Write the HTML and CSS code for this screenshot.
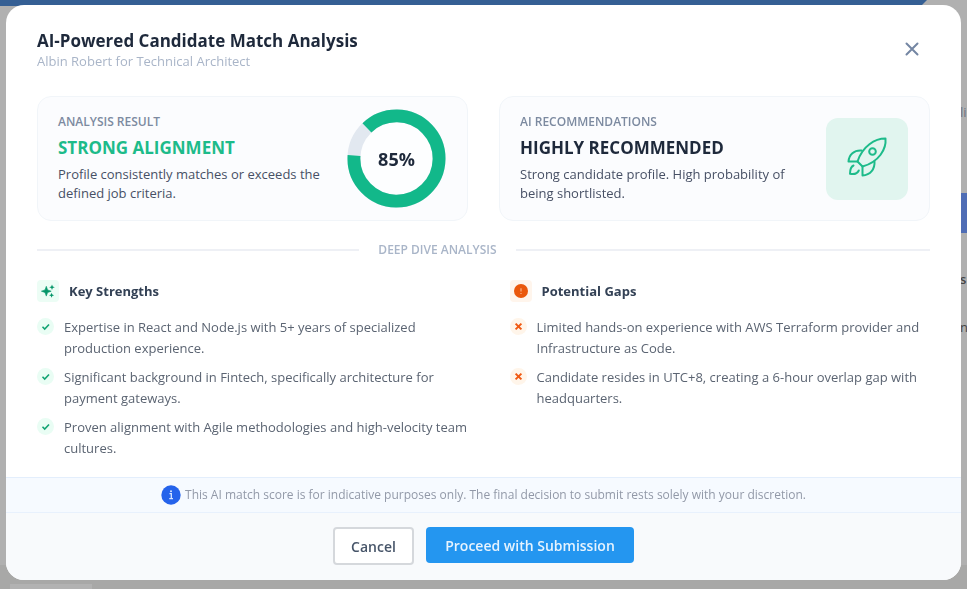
FILE: index.html
```html
<!DOCTYPE html>
<html lang="en">
<head>
    <meta charset="UTF-8">
    <meta name="viewport" content="width=device-width, initial-scale=1.0">
    <title>AI-Powered Candidate Match Analysis</title>
    <link rel="stylesheet" href="styles.css">
</head>
<body>
    <!-- Dimmed page behind the dialog -->
    <div class="page" aria-hidden="true">
        <div class="page-banner"></div>
        <div class="page-side">
            <span class="side-label">li</span>
            <span class="side-button"></span>
            <span class="side-head">s</span>
            <span class="side-cell">n</span>
        </div>
        <div class="page-tab"></div>
    </div>

    <div class="modal" role="dialog" aria-labelledby="modalTitle">
        <header class="modal-header">
            <div>
                <h1 id="modalTitle">AI-Powered Candidate Match Analysis</h1>
                <p class="subtitle">Albin Robert for Technical Architect</p>
            </div>
            <button class="close" aria-label="Close">
                <svg width="14" height="14" viewBox="0 0 14 14"><path d="M1.5 1.5l11 11M12.5 1.5l-11 11" fill="none" stroke="#7486a3" stroke-width="2" stroke-linecap="round"/></svg>
            </button>
        </header>

        <main class="modal-body">
            <div class="cards">
                <section class="card">
                    <div class="card-text">
                        <h2>ANALYSIS RESULT</h2>
                        <p class="result green">STRONG ALIGNMENT</p>
                        <p class="description">Profile consistently matches or exceeds the defined job criteria.</p>
                    </div>
                    <div class="score">
                        <svg viewBox="0 0 100 100">
                            <circle cx="50" cy="50" r="43" fill="#fdfeff" stroke="#e2e8f0" stroke-width="13"/>
                            <circle cx="50" cy="50" r="43" fill="none" stroke="#12b88a" stroke-width="13" pathLength="360" stroke-dasharray="318 42" transform="rotate(226 50 50)"/>
                        </svg>
                        <span class="score-value">85%</span>
                    </div>
                </section>

                <section class="card">
                    <div class="card-text">
                        <h2>AI RECOMMENDATIONS</h2>
                        <p class="result">HIGHLY RECOMMENDED</p>
                        <p class="description">Strong candidate profile. High probability of being shortlisted.</p>
                    </div>
                    <div class="rocket">
                        <svg width="40" height="40" viewBox="0 0 40 40" fill="none" stroke="#1dbb8a" stroke-width="2" stroke-linejoin="round" stroke-linecap="round">
                            <path d="M38.500 -.5C28 -.5 15.500 7 10.500 22.500L15.500 27.500C32 23 39.500 10 38.500 -.5Z"/>
                            <circle cx="25.500" cy="12.500" r="3.300"/>
                            <path d="M14.500 11.500C7 11 2 15.500 1.500 22.500H10.500"/>
                            <path d="M27.500 22.500C28 30 23.500 36 15.500 36.500V27.500"/>
                            <path d="M6.500 26.500C3.500 28 3 31 3 34.800C7 35.500 10.500 34.500 11.800 31.500"/>
                        </svg>
                    </div>
                </section>
            </div>

            <div class="divider"><span>DEEP DIVE ANALYSIS</span></div>

            <div class="columns">
                <section>
                    <h3>
                        <span class="head-icon mint">
                            <svg width="14" height="14" viewBox="0 0 14 14" fill="#059669">
                                <path d="M5.300 2.300L6.600 5.900L10.200 7.200L6.600 8.500L5.300 12.100L4 8.500L.4 7.200L4 5.900Z" stroke="#059669" stroke-width=".6" stroke-linejoin="round"/>
                                <path d="M11 .4L11.800 2.400L13.800 3.200L11.800 4L11 6L10.200 4L8.200 3.200L10.200 2.400Z"/>
                                <path d="M10.600 8.800L11.300 10.600L13.100 11.300L11.300 12L10.600 13.800L9.900 12L8.100 11.300L9.900 10.600Z"/>
                            </svg>
                        </span>
                        Key Strengths
                    </h3>
                    <ul class="strengths">
                        <li>
                            <svg class="badge" viewBox="0 0 17 17"><circle cx="8.500" cy="8.500" r="8.500" fill="#e9fdf4"/><path d="M5.500 8.800L7.700 11L12 6.500" fill="none" stroke="#12a473" stroke-width="1.600"/></svg>
                            Expertise in React and Node.js with 5+ years of specialized production experience.
                        </li>
                        <li>
                            <svg class="badge" viewBox="0 0 17 17"><circle cx="8.500" cy="8.500" r="8.500" fill="#e9fdf4"/><path d="M5.500 8.800L7.700 11L12 6.500" fill="none" stroke="#12a473" stroke-width="1.600"/></svg>
                            Significant background in Fintech, specifically architecture for payment gateways.
                        </li>
                        <li>
                            <svg class="badge" viewBox="0 0 17 17"><circle cx="8.500" cy="8.500" r="8.500" fill="#e9fdf4"/><path d="M5.500 8.800L7.700 11L12 6.500" fill="none" stroke="#12a473" stroke-width="1.600"/></svg>
                            Proven alignment with Agile methodologies and high-velocity team cultures.
                        </li>
                    </ul>
                </section>

                <section>
                    <h3>
                        <span class="head-icon peach">
                            <svg width="14" height="14" viewBox="0 0 14 14"><circle cx="7" cy="7" r="7" fill="#ea580c"/><path d="M7 4.200V7.600M7 9v1" stroke="#f9b48c" stroke-width="1.200"/></svg>
                        </span>
                        Potential Gaps
                    </h3>
                    <ul class="gaps">
                        <li>
                            <svg class="badge" viewBox="0 0 17 17"><circle cx="8.500" cy="8.500" r="8.500" fill="#fff5ea"/><path d="M5.600 5.600L11.400 11.400M11.400 5.600L5.600 11.400" stroke="#f05a14" stroke-width="2"/></svg>
                            Limited hands-on experience with AWS Terraform provider and Infrastructure as Code.
                        </li>
                        <li>
                            <svg class="badge" viewBox="0 0 17 17"><circle cx="8.500" cy="8.500" r="8.500" fill="#fff5ea"/><path d="M5.600 5.600L11.400 11.400M11.400 5.600L5.600 11.400" stroke="#f05a14" stroke-width="2"/></svg>
                            Candidate resides in UTC+8, creating a 6-hour overlap gap with headquarters.
                        </li>
                    </ul>
                </section>
            </div>
        </main>

        <div class="notice">
            <svg width="20" height="20" viewBox="0 0 20 20"><circle cx="10" cy="10" r="9.700" fill="#2563eb"/><path d="M8.500 8.600H10.300V13.600M8.300 13.700H12" fill="none" stroke="#dbe7ff" stroke-width="1.300"/><circle cx="10" cy="6.300" r="1" fill="#dbe7ff"/></svg>
            <span>This AI match score is for indicative purposes only. The final decision to submit rests solely with your discretion.</span>
        </div>

        <footer class="modal-footer">
            <button class="cancel">Cancel</button>
            <button class="proceed">Proceed with Submission</button>
        </footer>
    </div>
</body>
</html>
```
FILE: styles.css
```css
* {
    box-sizing: border-box;
}

body {
    font-family: "Open Sans", sans-serif;
    font-size: 13px;
    margin: 0;
    padding: 5px 6px 9px;
    background-color: #b0b0b0;
}

h1, h2, h3, p, ul {
    margin: 0;
    padding: 0;
}

button {
    font-family: inherit;
    cursor: pointer;
}

/* page behind the dialog */
.page {
    position: fixed;
    inset: 0;
    overflow: hidden;
    display: flex;
    flex-direction: column;
    justify-content: space-between;
    background: linear-gradient(#b0b0b0 96%, #a8a8a7 96%);
}

.page-banner {
    height: 6px;
    margin-right: 40px;
    background-color: #355f94;
    clip-path: polygon(0 0, 100% 0, calc(100% - 6px) 100%, 0 100%);
}

.page-side {
    flex: 1;
    align-self: flex-end;
    display: flex;
    flex-direction: column;
    width: 7px;
    padding-top: 96px;
    color: #444;
    line-height: 20px;
}

.side-label {
    color: #6b7280;
}

.side-button {
    height: 40px;
    margin: 71px 0 36px;
    background-color: #4f6db5;
}

.side-head {
    font-weight: 600;
}

.side-cell {
    margin-top: 28px;
}

.page-tab {
    width: 82px;
    height: 5px;
    margin-left: 10px;
    background-color: #b2b2b2;
}

.modal {
    position: relative;
    overflow: hidden;
    border-radius: 18px;
    background-color: #fff;
}

.modal-header {
    display: flex;
    justify-content: space-between;
    align-items: flex-start;
    padding: 24px 31px 27px;
}

h1 {
    font-size: 17px;
    line-height: 24px;
    color: #1e293b;
}

.subtitle {
    line-height: 16px;
    color: #a9b5c8;
}

.close {
    display: flex;
    padding: 5px;
    margin: 8px 6px 0 0;
    border: none;
    background: none;
}

.modal-body {
    padding: 0 31px 18px;
}

.cards {
    display: grid;
    grid-template-columns: 1fr 1fr;
    gap: 31px;
}

.card {
    display: flex;
    justify-content: space-between;
    align-items: center;
    padding: 12px 21px 12px 20px;
    border: 1px solid #f1f5f9;
    border-radius: 14px;
    background-color: #fbfcfe;
}

.card-text {
    max-width: 272px;
}

h2 {
    font-size: 12px;
    font-weight: 600;
    line-height: 16px;
    color: #7c8aa0;
}

.result {
    margin: 6px 0 5px;
    font-size: 17px;
    font-weight: 700;
    line-height: 24px;
    color: #1e293b;
}

.green {
    color: #1dbb8a;
}

.description {
    line-height: 19px;
    color: #475065;
}

.score {
    display: grid;
    place-items: center;
    width: 99px;
    height: 99px;
}

.score svg, .score-value {
    grid-area: 1 / 1;
}

.score svg {
    width: 100%;
}

.score-value {
    font-size: 18px;
    font-weight: 700;
    color: #1e293b;
}

.rocket {
    display: flex;
    align-items: center;
    justify-content: center;
    width: 82px;
    height: 82px;
    border-radius: 12px;
    background-color: #e1f5ef;
}

.rocket svg {
    overflow: visible;
}

.divider {
    display: flex;
    align-items: center;
    gap: 19px;
    margin: 21px 0 22px;
    font-size: 12px;
    font-weight: 600;
    line-height: 16px;
    color: #a9b5c8;
}

.divider::before, .divider::after {
    content: "";
    flex: 7;
    height: 2px;
    background-color: #eef0f5;
}

.divider::after {
    flex: 9;
}

.columns {
    display: grid;
    grid-template-columns: 21fr 20fr;
    gap: 31px;
}

h3 {
    display: flex;
    align-items: center;
    gap: 10px;
    font-size: 13px;
    line-height: 22px;
    color: #334155;
}

.head-icon {
    display: flex;
    align-items: center;
    justify-content: center;
    width: 22px;
    height: 22px;
    border-radius: 4px;
}

.mint {
    background-color: #ecfdf5;
}

.peach {
    background-color: #fff5ec;
}

ul {
    display: flex;
    flex-direction: column;
    gap: 8px;
    margin-top: 15px;
    list-style: none;
}

li {
    display: flex;
    gap: 10px;
    line-height: 21px;
    color: #5b6472;
}

.badge {
    flex: none;
    width: 17px;
    height: 17px;
    margin-top: 1px;
}

.notice {
    display: flex;
    align-items: center;
    justify-content: center;
    gap: 4px;
    padding: 7px 31px;
    border-top: 1px solid #e3eefc;
    border-bottom: 1px solid #e8f1fd;
    background-color: #f6faff;
    font-size: 12px;
    line-height: 20px;
    color: #9299a8;
}

.modal-footer {
    display: flex;
    justify-content: center;
    align-items: flex-start;
    gap: 12px;
    padding: 14px 31px 15px;
    background-color: #f8fafc;
}

.cancel, .proceed {
    border-radius: 4px;
    font-size: 14px;
    font-weight: 600;
}

.cancel {
    width: 81px;
    height: 38px;
    border: 2px solid #d5d8dc;
    background-color: #fff;
    color: #475569;
}

.proceed {
    width: 208px;
    height: 36px;
    border: none;
    background-color: #2496f0;
    color: #e6f3fe;
}
```
